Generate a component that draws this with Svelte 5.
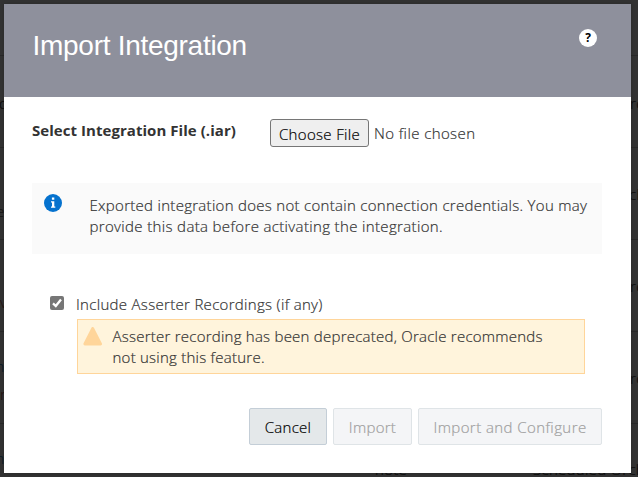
<script>
  const rules = [55, 147, 239, 331, 423];
  const fragments = [
    { text: 'o', x: -1, y: 93, color: '#0c0c0c' },
    { text: 'e', x: -4, y: 201, color: '#171514' },
    { text: 'v', x: 0, y: 292, color: '#241514' },
    { text: 'm', x: -9, y: 356, color: '#0b1b28' },
    { text: 'r', x: 0, y: 384, color: '#241514' },
    { text: 'm', x: -9, y: 448, color: '#0b1b28' },
    { text: 'rc', x: 630, y: 93, color: '#0c0c0c' },
    { text: 'ch', x: 629, y: 184, color: '#0c0c0c' },
    { text: 'rc', x: 630, y: 276, color: '#0c0c0c' },
    { text: 'rc', x: 630, y: 368, color: '#0c0c0c' },
    { text: 'note', x: 375, y: 459, color: '#0c0c0c' },
    { text: 'Scheduled Orch', x: 533, y: 459, color: '#0c0c0c' }
  ];
  let includeRecordings = $state(true);
</script>

<div class="screen">
  <div class="backdrop" aria-hidden="true">
    {#each rules as y}
      <i class="rule" style="top:{y}px"></i>
    {/each}
    {#each fragments as f}
      <span class="fragment" style="left:{f.x}px;top:{f.y}px;color:{f.color}">{f.text}</span>
    {/each}
  </div>

  <div class="dialog" role="dialog" aria-label="Import Integration">
    <header>
      <h1>Import Integration</h1>
      <button class="help" aria-label="Help">?</button>
    </header>

    <div class="body">
      <div class="file-row">
        <strong>Select Integration File (.iar)</strong>
        <button class="choose">Choose File</button>
        <span class="none">No file chosen</span>
      </div>

      <div class="info">
        <svg width="18" height="18" viewBox="0 0 18 18">
          <circle cx="9" cy="9" r="9" fill="#0572ce" />
          <path d="M7.9 3.6h2.4v2.2H7.9zM7 7.2h3.3v5.2h1v1.3H7v-1.3h1V8.5H7z" fill="#fff" />
        </svg>
        <p>Exported integration does not contain connection credentials. You may<br /><span class="second">provide this data before activating the integration.</span></p>
      </div>

      <label class="check">
        <input type="checkbox" bind:checked={includeRecordings} />
        <span class="box">
          {#if includeRecordings}
            <svg width="14" height="14" viewBox="0 0 14 14"><path d="M3 7.3 5.8 10 11 3.6" fill="none" stroke="#fff" stroke-width="2.3" /></svg>
          {/if}
        </span>
        <span class="label">Include Asserter Recordings (if any)</span>
      </label>

      <div class="warning">
        <svg width="20" height="19" viewBox="0 0 20 19">
          <path d="M9.7 1.4 17.6 17H1.8z" fill="#ffd59a" stroke="#ffd59a" stroke-width="2.8" stroke-linejoin="round" />
        </svg>
        <p>Asserter recording has been deprecated, Oracle recommends<br />not using this feature.</p>
      </div>

      <footer>
        <button class="btn cancel">Cancel</button>
        <button class="btn import" disabled>Import</button>
        <button class="btn configure" disabled>Import and Configure</button>
      </footer>
    </div>
  </div>
</div>

<style>
  .screen, .screen * { box-sizing: border-box; }
  .screen {
    position: relative;
    width: 638px;
    height: 477px;
    padding: 4px 7px 4px 4px;
    overflow: hidden;
    background: #323232;
    color: #333;
    font: 300 15px/21px "Open Sans", "Noto Sans", sans-serif;
    letter-spacing: .29px;
    white-space: nowrap;
    -webkit-text-stroke: .2px currentColor;
  }
  .backdrop { position: absolute; inset: 0; }
  .rule { position: absolute; left: 0; right: 0; height: 1px; background: #282828; }
  .fragment { position: absolute; }
  .dialog { position: relative; width: 627px; height: 469px; background: #fff; box-shadow: 0 0 4px rgba(0, 0, 0, .2); }
  header {
    display: flex;
    justify-content: space-between;
    align-items: flex-start;
    height: 93px;
    padding: 25px 34px 0 28px;
    background: #8e909c;
  }
  h1 { margin: 0; padding: 1px 0 0 .5px; color: #fff; font: 400 28px/32px "Liberation Sans", Arial, sans-serif; letter-spacing: -.28px; -webkit-text-stroke: 0; }
  button { font-family: inherit; font-weight: inherit; letter-spacing: inherit; white-space: nowrap; }
  .help {
    display: grid;
    place-items: center;
    width: 18px;
    height: 18px;
    padding: 0 0 1px;
    border: 0;
    border-radius: 50%;
    background: #fff;
    color: #000;
    font: 700 12px/16px "Open Sans", sans-serif;
    letter-spacing: 0;
    -webkit-text-stroke: 0;
  }
  .body { padding: 22px 29px 0 28px; }
  .file-row { display: flex; align-items: flex-start; height: 64px; }
  .file-row strong { width: 238px; line-height: 22px; font-weight: 700; font-size: 15px; letter-spacing: .05px; -webkit-text-stroke: 0; }
  .choose { width: 99px; height: 28px; margin-right: 5px; padding: 1px 0 0; border: 1px solid #767676; border-radius: 3px; background: #efefef; color: #000; font-size: 15px; letter-spacing: .34px; }
  .none { line-height: 28px; letter-spacing: .4px; }
  p { margin: 0; }
  .info { display: flex; height: 71px; padding: 11px 0 0 12px; background: #fafafa; }
  .info p { margin-left: 27.5px; padding-top: 1px; }
  .second { letter-spacing: .35px; }
  .check { display: flex; align-items: center; height: 22px; margin: 39px 0 0 18px; }
  .check input { position: absolute; opacity: 0; }
  .box { width: 14px; height: 14px; margin: -2px 12px 0 0; border-radius: 2px; background: #767676; }
  .box svg { display: block; }
  .label { letter-spacing: .31px; }
  .warning { display: flex; width: 508px; height: 55px; margin: 4px 0 0 45px; padding: 6px 0 0 5px; border: 1px solid #ffd59a; background: #fff4dc; }
  .warning svg { margin-top: 1px; }
  .warning p { margin-left: 9.5px; letter-spacing: .24px; }
  footer { display: flex; justify-content: flex-end; gap: 6px; margin-top: 34px; }
  .btn { height: 37px; padding: 0; border: 1px solid #c4ced7; border-radius: 2px; background: #e4e8ea; color: #000; font-size: 15px; }
  .btn:disabled { border-color: #dfe4e7; background: #f4f5f7; color: #a0a0a0; }
  .cancel { width: 78px; }
  .import { width: 79px; }
  .configure { width: 184px; letter-spacing: .42px; }
</style>
